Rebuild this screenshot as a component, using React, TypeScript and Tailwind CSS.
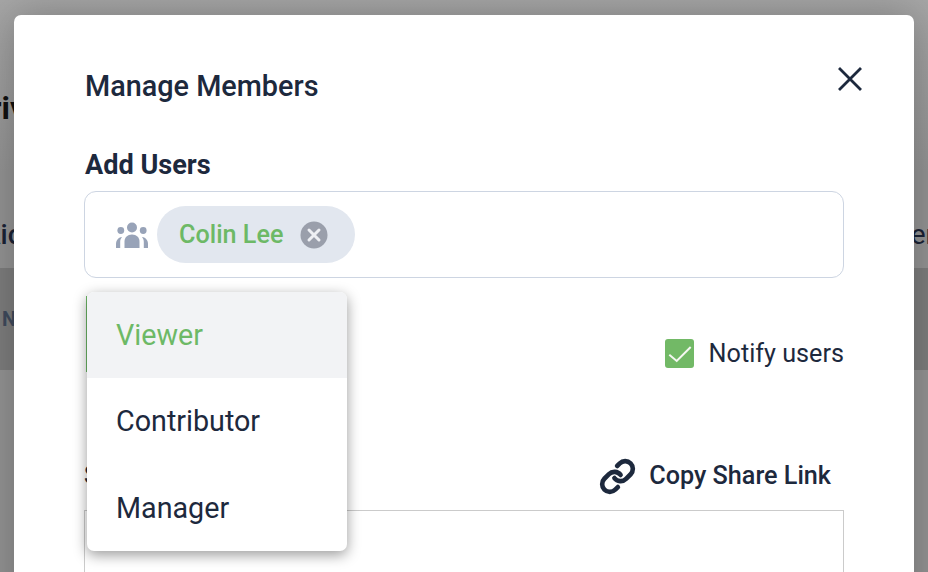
import { Link } from "lucide-react";

function PeopleIcon() {
  return (
    <svg width="34" height="30" viewBox="0 0 34 30" className="shrink-0" fill="#98a3b8">
      <circle cx="17" cy="7.5" r="5" />
      <circle cx="5.8" cy="10.5" r="3.4" />
      <circle cx="28.2" cy="10.5" r="3.4" />
      <path d="M9.5 28v-6.5c0-4 3-7 7.5-7s7.500 3 7.500 7V28z" />
      <path d="M1 28v-4c0-3.500 2-6.500 6-7-1.200 1.500-1.800 3-1.800 5v6z" />
      <path d="M33 28v-4c0-3.500-2-6.500-6-7 1.200 1.500 1.800 3 1.800 5v6z" />
    </svg>
  );
}

function ChipClose() {
  return (
    <svg width="28" height="28" viewBox="0 0 28 28" className="shrink-0">
      <circle cx="14" cy="14" r="13.500" fill="#9a9fab" />
      <path d="M9 9l10 10M19 9L9 19" stroke="#eef0f4" strokeWidth="3" strokeLinecap="round" />
    </svg>
  );
}

export default function App() {
  return (
    <div className="relative h-[572px] w-[928px] overflow-hidden bg-[#939393] font-['Roboto',sans-serif]">
      <div className="flex h-[572px] flex-col bg-gradient-to-b from-[#a6a6a6] via-[#939393] via-30% to-[#939393]">
        <div className="-ml-[31px] mt-[88px] text-[32px] font-bold leading-[40px] text-[#111]">Drive</div>
        <div className="mt-[87px] flex justify-between text-[28px] leading-[40px] text-[#1a2235]">
          <span className="-ml-[18px] font-medium">Aic</span>
          <span className="-mr-[7px]">User</span>
        </div>
        <div className="mt-[13px] flex h-[102px] items-center bg-[#7d7d7d] text-[20px] font-bold text-[#3f4a5c]">
          <span className="ml-[2px]">Name</span>
        </div>
      </div>

      <div className="absolute left-[14px] top-[15px] h-[620px] w-[900px] rounded-[7px] bg-white px-[70px] pt-[52px] shadow-[0_0_40px_rgba(0,0,0,0.25)]">
        <div className="flex items-start justify-between">
          <h2 className="pl-[1px] text-[28.800px] font-medium leading-[38px] text-[#1d293d]">Manage Members</h2>
          <svg width="24" height="24" viewBox="0 0 24 24" className="-mr-[18px]">
            <path d="M2 2l20 20M22 2L2 22" stroke="#1d293d" strokeWidth="2.800" strokeLinecap="square" />
          </svg>
        </div>

        <div className="mt-[43px] pl-[1px] text-[27.100px] font-bold leading-[34px] text-[#1d293d]">Add Users</div>

        <div className="mt-[9px] flex h-[87px] items-center gap-[8px] rounded-[12px] border border-[#cdd5e2] bg-white pl-[30px]">
          <PeopleIcon />
          <div className="flex h-[57px] items-center gap-[17px] rounded-full bg-[#e2e7ef] pl-[22px] pr-[27px]">
            <span className="text-[25.200px] font-medium leading-none text-[#6db966]">Colin Lee</span>
            <ChipClose />
          </div>
        </div>

        <div className="mt-[14px] flex items-center justify-between">
          <div className="relative ml-[2px] mt-[4px] h-[76px] w-[260px] border-l border-[#6db966]">
            <div className="absolute -top-[4px] left-0 z-10 flex w-[260px] flex-col overflow-hidden rounded-[7px] bg-white text-[28.700px] leading-none text-[#1d293d] shadow-[0_4px_14px_rgba(0,0,0,0.4)]">
              <div className="flex h-[86px] items-center bg-[#f2f3f5] pl-[29px] text-[#6db966]">Viewer</div>
              <div className="flex h-[87px] items-center pl-[29px]">Contributor</div>
              <div className="flex h-[86px] items-center pl-[29px]">Manager</div>
            </div>
          </div>
          <div className="flex items-center gap-[15px] pt-[43px]">
            <div className="flex h-[29px] w-[29px] items-center justify-center rounded-[3px] bg-[#72b966]">
              <svg width="29" height="29" viewBox="0 0 29 29">
                <path d="M4.300 15.700L11.700 22 25.700 8" fill="none" stroke="#f5f7f2" strokeWidth="2" />
              </svg>
            </div>
            <span className="text-[25.200px] leading-none text-[#1d293d]">Notify users</span>
          </div>
        </div>

        <div className="mt-[84px] flex items-center justify-between pr-[13px]">
          <span className="text-[25px] font-medium leading-[40px] text-[#1d293d]">Share Link</span>
          <div className="flex items-center gap-[13px]">
            <Link size={37} strokeWidth={3} color="#1d293d" />
            <span className="text-[25.200px] font-medium leading-none text-[#1d293d]">Copy Share Link</span>
          </div>
        </div>

        <div className="mt-[14px] h-[120px] border border-[#cbcbcb]"></div>
      </div>
    </div>
  );
}
